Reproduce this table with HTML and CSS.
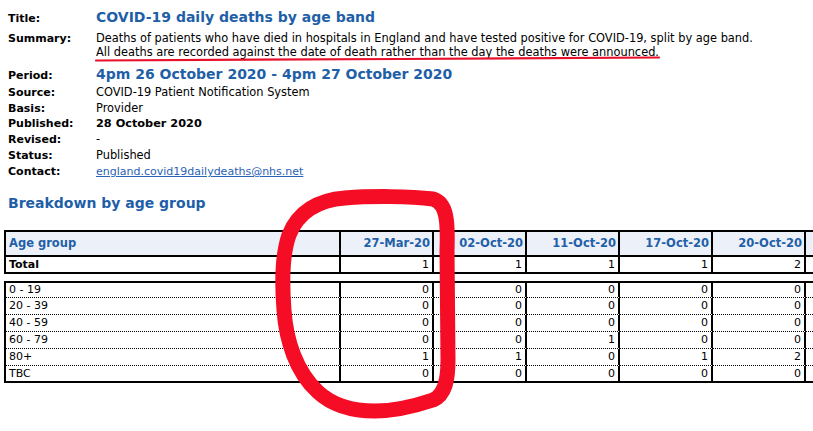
FILE: index.html
```html
<!DOCTYPE html>
<html lang="en">
<head>
<meta charset="utf-8">
<title>COVID-19 daily deaths by age band</title>
<link rel="stylesheet" href="styles.css">
</head>
<body>
<div class="page">
  <div class="meta">
    <div class="row row-title"><span class="label">Title:</span><span class="value big">COVID-19 daily deaths by age band</span></div>
    <div class="row row-summary"><span class="label">Summary:</span><span class="value">Deaths of patients who have died in hospitals in England and have tested positive for COVID-19, split by age band.<br>All deaths are recorded against the date of death rather than the day the deaths were announced.</span></div>
    <div class="row row-period"><span class="label">Period:</span><span class="value big">4pm 26 October 2020 - 4pm 27 October 2020</span></div>
    <div class="row"><span class="label">Source:</span><span class="value">COVID-19 Patient Notification System</span></div>
    <div class="row"><span class="label">Basis:</span><span class="value">Provider</span></div>
    <div class="row"><span class="label">Published:</span><span class="value strong">28 October 2020</span></div>
    <div class="row"><span class="label">Revised:</span><span class="value">-</span></div>
    <div class="row"><span class="label">Status:</span><span class="value">Published</span></div>
    <div class="row"><span class="label">Contact:</span><span class="value"><a class="link" href="#">england.covid19dailydeaths@nhs.net</a></span></div>
  </div>

  <h2 class="section">Breakdown by age group</h2>

  <div class="table-wrap">
    <table class="data data-head">
      <colgroup><col class="c-name"><col class="c-num"><col class="c-num"><col class="c-num"><col class="c-num"><col class="c-num"><col class="c-num"></colgroup>
      <thead>
        <tr class="hdr"><th class="name">Age group</th><th>27-Mar-20</th><th>02-Oct-20</th><th>11-Oct-20</th><th>17-Oct-20</th><th>20-Oct-20</th><th></th></tr>
      </thead>
      <tbody>
        <tr class="total"><td class="name">Total</td><td>1</td><td>1</td><td>1</td><td>1</td><td>2</td><td></td></tr>
      </tbody>
    </table>
    <table class="data data-body">
      <colgroup><col class="c-name"><col class="c-num"><col class="c-num"><col class="c-num"><col class="c-num"><col class="c-num"><col class="c-num"></colgroup>
      <tbody>
        <tr><td class="name">0 - 19</td><td>0</td><td>0</td><td>0</td><td>0</td><td>0</td><td></td></tr>
        <tr><td class="name">20 - 39</td><td>0</td><td>0</td><td>0</td><td>0</td><td>0</td><td></td></tr>
        <tr><td class="name">40 - 59</td><td>0</td><td>0</td><td>0</td><td>0</td><td>0</td><td></td></tr>
        <tr><td class="name">60 - 79</td><td>0</td><td>0</td><td>1</td><td>0</td><td>0</td><td></td></tr>
        <tr><td class="name">80+</td><td>1</td><td>1</td><td>0</td><td>1</td><td>2</td><td></td></tr>
        <tr><td class="name">TBC</td><td>0</td><td>0</td><td>0</td><td>0</td><td>0</td><td></td></tr>
      </tbody>
    </table>
  </div>

  <svg class="marks" width="813" height="431" viewBox="0 0 813 431" aria-hidden="true">
    <path class="underline" d="M96 60.5 C 200 59.8, 300 59.5, 400 59 S 600 58, 659 57.5"/>
    <path class="circle" d="M447 250 C 448 222, 447 203, 433 199 C 410 196, 370 196, 345 198 C 318 200, 298 212, 289 235 C 282 255, 282 285, 284 310 C 286 340, 296 372, 318 392 C 332 405, 350 411, 375 411 C 395 411, 415 406, 433 400 C 445 395, 448 380, 448 360 Z"/>
  </svg>
</div>
</body>
</html>
```

FILE: styles.css
```css
html, body {
  margin: 0;
  padding: 0;
  background: #ffffff;
  overflow: hidden;
}

body {
  font-family: "DejaVu Sans", Verdana, sans-serif;
  font-size: 11px;
  color: #000000;
}

.page {
  position: relative;
  padding: 7px 0 0 4px;
  width: 809px;
  height: 424px;
}

.meta {
  padding-left: 4px;
}

.row {
  display: flex;
  align-items: baseline;
  line-height: 16px;
  height: 15.8px;
}

.row-title {
  line-height: 20px;
  height: 20px;
}

.row-summary {
  margin-top: 4px;
  line-height: 14px;
  height: 28px;
}

.row-period {
  margin-top: 6px;
  line-height: 19px;
  height: 19px;
}

.label {
  flex: 0 0 88px;
  font-weight: bold;
  font-size: 11px;
}

.value {
  flex: 1 1 auto;
  font-size: 11.4px;
}

.value.big {
  font-size: 14px;
  font-weight: bold;
  color: #1f5fa8;
}

.value.strong {
  font-weight: bold;
  font-size: 11.3px;
}

.link {
  font-size: 11px;
  color: #2a62b4;
  text-decoration: underline;
}

.section {
  margin: 14px 0 0 4px;
  font-size: 14px;
  line-height: 20px;
  font-weight: bold;
  color: #1f5fa8;
}

.table-wrap {
  margin-top: 17px;
  width: 809px;
  overflow: hidden;
}

.data {
  border-collapse: separate;
  border-spacing: 0;
  table-layout: fixed;
  width: 895px;
  border-top: 2px solid #000;
  border-left: 2px solid #000;
}

.c-name { width: 335px; }
.c-num { width: 93px; }

.data th,
.data td {
  border-right: 2px solid #000;
  padding: 0 3px;
  text-align: right;
  white-space: nowrap;
  overflow: hidden;
}

.data .name {
  text-align: left;
}

.hdr th {
  line-height: 23px;
  border-bottom: 2px solid #000;
  background: #ecf1f9;
  color: #1f5fa8;
  font-weight: bold;
  font-size: 11.5px;
  padding-right: 2px;
}

.total td {
  line-height: 15px;
  border-bottom: 2px solid #000;
}

.total .name {
  font-weight: bold;
}

.data-body {
  margin-top: 7px;
}

.data-body td {
  line-height: 16px;
  border-bottom: 1px dotted #000;
}

.data-body tr:first-child td {
  line-height: 14px;
}

.data-body tr:last-child td {
  line-height: 15px;
  border-bottom: 2px solid #000;
}

.marks {
  position: absolute;
  left: 0;
  top: 0;
  pointer-events: none;
}

.underline {
  fill: none;
  stroke: #e8102a;
  stroke-width: 2.2;
  stroke-linecap: round;
}

.circle {
  fill: none;
  stroke: #f40d25;
  stroke-width: 15;
  stroke-linecap: round;
  stroke-linejoin: round;
  filter: blur(0.6px);
}
```
